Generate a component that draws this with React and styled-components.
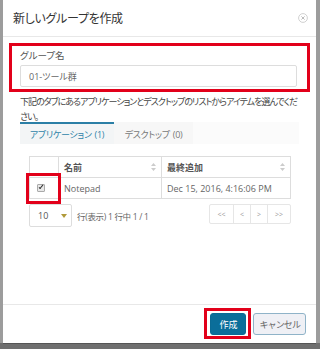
import React from "react";
import styled, { createGlobalStyle } from "styled-components";

const GlobalStyle = createGlobalStyle`
  html, body {
    margin: 0;
    padding: 0;
    background: #9c9c9c;
    overflow: hidden;
  }
  body {
    font-family: "Open Sans", "Noto Sans CJK JP", sans-serif;
    font-feature-settings: "palt";
    color: #555;
  }
`;

const Backdrop = styled.div`
  width: 320px;
  height: 349px;
  background: linear-gradient(#9c9c9c 0, #9c9c9c 343px, #6f6f6f 343px);
  box-sizing: border-box;
  padding: 0 4px 0 3px;
`;

const Modal = styled.div`
  height: 343px;
  background: #fff;
  display: flex;
  flex-direction: column;
  box-shadow: 0 1px 0 #555;
`;

const Header = styled.div`
  height: 37px;
  flex: none;
  display: flex;
  align-items: center;
  justify-content: space-between;
  padding: 0 8px 0 10px;
  border-bottom: 1px solid #e8e8e8;
  box-sizing: border-box;
`;

const Title = styled.h4`
  margin: 0;
  font-size: 12px;
  font-weight: normal;
  color: #333;
  letter-spacing: -0.3px;
`;

const CloseIcon = styled.svg`
  width: 10px;
  height: 10px;
  display: block;
`;

const Body = styled.div`
  padding: 6px 6px 0 6px;
  flex: 1;
`;

const Highlight = styled.div`
  border: 3px solid #e2001a;
  padding: 3px 10px 2px 8px;
`;

const Label = styled.div`
  font-size: 9.5px;
  color: #555;
  line-height: 13px;
  margin-bottom: 3px;
`;

const Input = styled.div`
  height: 22px;
  border: 1px solid #ddd;
  border-radius: 2px;
  box-sizing: border-box;
  display: flex;
  align-items: center;
  padding-left: 8px;
  font-size: 9px;
  color: #666;
`;

const Content = styled.div`
  padding: 2px 11px 0 11px;
`;

const Help = styled.p`
  margin: 0;
  font-size: 9px;
  letter-spacing: -0.98px;
  line-height: 15px;
  color: #444;
`;

const Tabs = styled.div`
  margin-top: -2px;
  display: flex;
  height: 22px;
  background: #fbfbfb;
`;

const Tab = styled.div`
  width: ${p => p.$w}px;
  box-sizing: border-box;
  display: flex;
  align-items: center;
  justify-content: center;
  font-size: 9px;
  letter-spacing: -0.3px;
  word-spacing: 1px;
  color: ${p => (p.$active ? "#2f84a8" : "#777")};
  background: ${p => (p.$active ? "#f3f5f6" : "#f7f7f7")};
  border-top: 2px solid ${p => (p.$active ? "#2b7fa6" : "transparent")};
`;

const TableArea = styled.div`
  padding: 12px 8px 0 9px;
`;

const Table = styled.table`
  width: 100%;
  border-collapse: collapse;
  font-size: 9px;
  td, th {
    border: 1px solid #ddd;
    height: 21px;
    padding: 0 5px;
    text-align: left;
    box-sizing: border-box;
  }
  th {
    font-weight: bold;
    color: #555;
  }
  td {
    color: #666;
  }
`;

const HeadCell = styled.div`
  display: flex;
  align-items: center;
  justify-content: space-between;
`;

const SortIcon = styled.svg`
  width: 5px;
  height: 8px;
  display: block;
`;

const CheckCell = styled.td`
  position: relative;
  width: 29px;
  &&& {
    padding: 0 0 0 7px;
  }
`;

const CheckBox = styled.span`
  display: block;
  width: 6px;
  height: 6px;
  border: 1px solid #aaa;
  border-radius: 1px;
  background: #e8e8e8;
  position: relative;
  &::after {
    content: "";
    position: absolute;
    left: 2px;
    top: -1px;
    width: 1px;
    height: 4px;
    border: solid #333;
    border-width: 0 1.5px 1.5px 0;
    transform: rotate(40deg);
  }
`;

const Marker = styled.span`
  position: absolute;
  left: -4px;
  top: -5px;
  width: 35px;
  height: 31px;
  border: 3px solid #e2001a;
  box-sizing: border-box;
`;

const PagerRow = styled.div`
  display: flex;
  align-items: center;
  margin-top: 5px;
`;

const Select = styled.div`
  width: 43px;
  height: 23px;
  border: 1px solid #ddd;
  border-radius: 2px;
  box-sizing: border-box;
  display: flex;
  align-items: center;
  justify-content: space-between;
  padding: 0 4px 0 8px;
  font-size: 9px;
  color: #555;
  &::after {
    content: "";
    border-left: 3px solid transparent;
    border-right: 3px solid transparent;
    border-top: 4px solid #b09a3a;
  }
`;

const PagerText = styled.span`
  margin-left: 5px;
  font-size: 8.5px;
  letter-spacing: -0.3px;
  color: #666;
  flex: 1;
`;

const Pager = styled.div`
  display: flex;
  margin-top: -3px;
`;

const PageButton = styled.span`
  width: ${p => p.$w}px;
  height: 20px;
  box-sizing: border-box;
  border: 1px solid #e6e6e6;
  margin-left: -1px;
  display: flex;
  align-items: center;
  justify-content: center;
  font-size: 7px;
  color: #999;
  &:first-child {
    border-radius: 2px 0 0 2px;
  }
  &:last-child {
    border-radius: 0 2px 2px 0;
  }
`;

const Footer = styled.div`
  height: 39px;
  flex: none;
  box-sizing: border-box;
  border-top: 1px solid #e8e8e8;
  display: flex;
  justify-content: flex-end;
  align-items: flex-start;
  padding: 8px 10px 0 0;
  gap: 7px;
`;

const Button = styled.button`
  position: relative;
  height: 22px;
  padding: 0 ${p => (p.$primary ? 8 : 5)}px;
  border-radius: 3px;
  font-family: inherit;
  font-size: 9px;
  letter-spacing: ${p => (p.$primary ? 0 : -0.9)}px;
  cursor: pointer;
  border: 1px solid ${p => (p.$primary ? "#0b6a94" : "#8fb3c8")};
  background: ${p => (p.$primary ? "#0b6e9a" : "#eff0f5")};
  color: ${p => (p.$primary ? "#fff" : "#666")};
  ${p =>
    p.$marked &&
    `
    &::after {
      content: "";
      position: absolute;
      left: -7px;
      right: -6px;
      top: -6px;
      bottom: -5px;
      border: 3px solid #e2001a;
    }
  `}
`;

const Sort = () => (
  <SortIcon viewBox="0 0 5 8">
    <path d="M2.5 0 L5 3 L0 3 Z M2.5 8 L5 5 L0 5 Z" fill="#ccc" />
  </SortIcon>
);

export default function App() {
  return (
    <>
      <GlobalStyle />
      <Backdrop>
        <Modal>
          <Header>
            <Title>新しいグループを作成</Title>
            <CloseIcon viewBox="0 0 10 10">
              <circle cx="5" cy="5" r="4.4" fill="none" stroke="#ccc" strokeWidth="0.9" />
              <path d="M3.4 3.4 L6.6 6.6 M6.6 3.4 L3.4 6.6" stroke="#bbb" strokeWidth="1" />
            </CloseIcon>
          </Header>
          <Body>
            <Highlight>
              <Label>グループ名</Label>
              <Input>01-ツール群</Input>
            </Highlight>
            <Content>
              <Help>
                下記のタブにあるアプリケーションとデスクトップのリストからアイテムを選んでください。
              </Help>
              <Tabs>
                <Tab $active $w={94}>アプリケーション (1)</Tab>
                <Tab $w={79}>デスクトップ (0)</Tab>
              </Tabs>
              <TableArea>
                <Table>
                  <thead>
                    <tr>
                      <th style={{ width: 29 }}></th>
                      <th style={{ width: 103 }}>
                        <HeadCell>
                          名前
                          <Sort />
                        </HeadCell>
                      </th>
                      <th>
                        <HeadCell>
                          最終追加
                          <Sort />
                        </HeadCell>
                      </th>
                    </tr>
                  </thead>
                  <tbody>
                    <tr>
                      <CheckCell>
                        <CheckBox />
                        <Marker />
                      </CheckCell>
                      <td>Notepad</td>
                      <td>Dec 15, 2016, 4:16:06 PM</td>
                    </tr>
                  </tbody>
                </Table>
                <PagerRow>
                  <Select>10</Select>
                  <PagerText>行(表示) 1 行中 1 / 1</PagerText>
                  <Pager>
                    <PageButton $w={25}>&lt;&lt;</PageButton>
                    <PageButton $w={18}>&lt;</PageButton>
                    <PageButton $w={18}>&gt;</PageButton>
                    <PageButton $w={24}>&gt;&gt;</PageButton>
                  </Pager>
                </PagerRow>
              </TableArea>
            </Content>
          </Body>
          <Footer>
            <Button $primary $marked>作成</Button>
            <Button>キャンセル</Button>
          </Footer>
        </Modal>
      </Backdrop>
    </>
  );
}
